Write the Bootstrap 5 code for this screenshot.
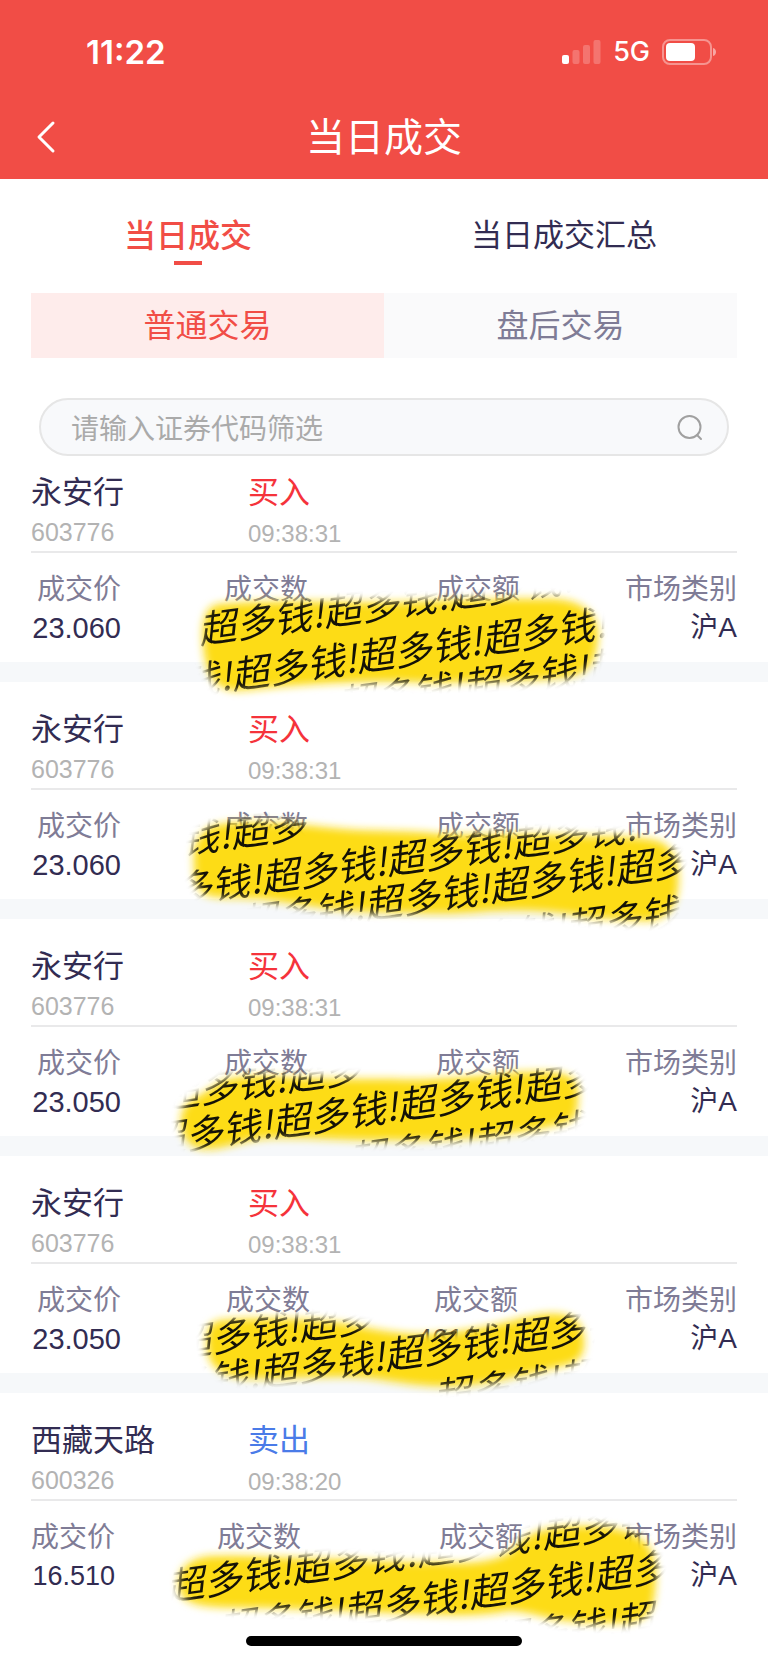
<!DOCTYPE html>
<html lang="zh-CN">
<head>
<meta charset="utf-8">
<meta name="viewport" content="width=device-width, initial-scale=1">
<title>当日成交</title>
<link href="https://cdn.jsdelivr.net/npm/bootstrap@5.3.0/dist/css/bootstrap.min.css" rel="stylesheet">
<style>
  :root { --gutter: 31px; --brand: #f14d46; --ink: #322c52; --muted-ink: #7f7c96; --pale: #b3b3b3; }
  body { font-family: "Liberation Sans", "Noto Sans CJK SC", sans-serif; color: var(--ink); background: #fff; }
  .app-header { background: var(--brand); color: #fff; padding-top: 32px; }
  .status-bar { height: 40px; padding: 0 51px 0 86px; font-family: Inter, sans-serif; }
  .clock { font-size: 33px; line-height: 40px; font-weight: 600; }
  .carrier { font-size: 27px; line-height: 40px; font-weight: 500; }
  .title-bar { height: 84px; margin-top: 23px; padding: 0 23px; }
  .title-bar .side { width: 48px; }
  .title-bar h1 { font-size: 39px; line-height: 48px; font-weight: 400; padding-top: 2px; }
  .main-tabs { padding: 35px 16px 28px 0; }
  .main-tabs button { font-size: 31px; line-height: 44px; color: var(--ink); }
  .main-tabs button::after { content: ""; display: block; width: 28px; height: 4px; margin: 3px auto 0; }
  .main-tabs .active { color: var(--brand); font-weight: 500; font-size: 32px; }
  .main-tabs .active::after { background: var(--brand); }
  .segments { margin: 0 var(--gutter); }
  .segments button { height: 65px; font-size: 32px; line-height: 40px; color: var(--muted-ink); background: #fafafb; }
  .segments .active { color: var(--brand); background: #feeceb; }
  .search-box { height: 58px; margin: 40px 39px 0; padding: 2px 24px 0 30px; background: #f8f9fb; border: 2px solid #e6e6e6; }
  .search-box input { font-size: 28px; line-height: 40px; color: var(--ink); outline: 0; min-width: 0; padding: 3px 0 0; }
  .search-box input::placeholder { color: #aaa; opacity: 1; }
  .trade + .trade .trade-head { padding-top: 28px; }
  .trade-head { display: grid; grid-template-columns: 217fr 489fr; padding: 17px 0 5px; margin: 0 var(--gutter); }
  .trade-name { font-size: 31px; line-height: 40px; font-weight: 400; }
  .sub-text { font-size: 25px; line-height: 28px; color: var(--pale); margin-top: 5px; }
  .sub-text.time { font-size: 24px; margin-top: 7px; margin-bottom: -2px; }
  .buy { color: #f5333b; }
  .sell { color: #4a7be8; }
  .trade-body { position: relative; padding-bottom: 15px; }
  .figures { display: grid; grid-template-columns: 90fr 187fr 212fr 217fr; margin: 0 var(--gutter); padding-top: 18px; border-top: 2px solid #e9e9ea; }
  .figures.cols-b { grid-template-columns: 90fr 189fr 208fr 219fr; }
  .figures.cols-c { grid-template-columns: 84fr 186fr 222fr 214fr; }
  .figures dt, .figures dd { font-size: 28px; line-height: 38px; margin: 0; font-weight: 400; white-space: nowrap; }
  .figures dt { color: var(--muted-ink); }
  .figures .price { font-size: 29px; }
  .figures.cols-c .price { font-size: 27px; }
  .band { height: 20px; background: #f6f8fa; }
  .scribble { position: absolute; left: 0; top: 0; width: 100%; overflow: visible; z-index: 2; pointer-events: none; }
  .scribble text { font: italic 400 38px "Noto Sans CJK SC", sans-serif; fill: #141207; }
  .scribble .paint { fill: #fddc19; filter: url(#soft); }
  .scribble .reveal { fill: #fff; stroke: #fff; stroke-width: 2; filter: url(#soft); }
  .home-bar { width: 36%; height: 10px; margin: 26px auto 16px; background: #000; }
</style>
</head>
<body>
<svg width="0" height="0" class="position-absolute" aria-hidden="true">
  <defs><filter id="soft" x="-10%" y="-20%" width="120%" height="140%"><feGaussianBlur stdDeviation="4"/></filter></defs>
</svg>

<header class="app-header">
  <div class="status-bar d-flex align-items-center justify-content-between">
    <span class="clock">11:22</span>
    <div class="d-flex align-items-center">
      <svg width="39" height="26" viewBox="0 0 39 26" fill="#fff" aria-hidden="true">
        <rect x="0" y="16" width="7" height="9" rx="2"/>
        <g opacity=".22"><rect x="10.500" y="11" width="7" height="14" rx="2"/><rect x="21" y="6" width="7" height="19" rx="2"/><rect x="31.500" y="1" width="7" height="24" rx="2"/></g>
      </svg>
      <span class="carrier ms-2 ps-1 me-2 pe-1">5G</span>
      <svg width="55" height="26" viewBox="0 0 55 26" aria-hidden="true">
        <rect x="1" y="1" width="48" height="24" rx="7" fill="none" stroke="#fff" stroke-opacity=".4" stroke-width="2"/>
        <rect x="4" y="4" width="29" height="18" rx="4" fill="#fff"/>
        <path d="M51 9c4 1 4 7 0 8z" fill="#fff" fill-opacity=".5"/>
      </svg>
    </div>
  </div>
  <div class="title-bar d-flex align-items-center">
    <button type="button" class="side btn p-0 border-0 text-start" aria-label="返回">
      <svg width="44" height="36" viewBox="0 0 44 36" fill="none" stroke="#fff" stroke-width="3" stroke-linejoin="round" stroke-linecap="round"><path d="M30 4 16 18l14 14"/></svg>
    </button>
    <h1 class="flex-grow-1 text-center m-0">当日成交</h1>
    <span class="side"></span>
  </div>
</header>

<main>
  <div class="main-tabs d-flex" role="tablist">
    <button type="button" role="tab" aria-selected="true" class="active col-6 border-0 bg-transparent p-0">当日成交</button>
    <button type="button" role="tab" aria-selected="false" class="col-6 border-0 bg-transparent p-0">当日成交汇总</button>
  </div>
  <div class="segments d-flex">
    <button type="button" class="active col-6 border-0 p-0">普通交易</button>
    <button type="button" class="col-6 border-0 p-0">盘后交易</button>
  </div>
  <form class="search-box d-flex align-items-center rounded-pill">
    <input type="text" class="flex-grow-1 border-0 bg-transparent" placeholder="请输入证券代码筛选" aria-label="证券代码">
    <button type="button" class="border-0 bg-transparent p-0 d-flex" aria-label="搜索">
      <svg width="26" height="28" viewBox="0 0 26 28" fill="none" stroke="#a0a0a0" stroke-width="2" stroke-linecap="round"><circle cx="12.500" cy="13" r="11"/><path d="m20 21 4 4"/></svg>
    </button>
  </form>

  <article class="trade">
    <div class="trade-head">
      <div><h2 class="trade-name m-0">永安行</h2><div class="sub-text">603776</div></div>
      <div><div class="trade-name buy">买入</div><div class="sub-text time">09:38:31</div></div>
    </div>
    <div class="trade-body">
      <dl class="figures mb-0 text-end">
        <div><dt>成交价</dt><dd class="price">23.060</dd></div>
        <div><dt>成交数</dt></div>
        <div><dt>成交额</dt></div>
        <div><dt>市场类别</dt><dd>沪A</dd></div>
      </dl>
      <svg class="scribble" viewBox="0 0 768 150">
        <path class="paint" d="M203 90C202 65 208 53 222 53C280 48 340 52 400 51C450 50 500 47 539 48C570 46 594 54 598 80C598 105 592 118 576 124C540 132 500 128 440 132C370 128 310 132 245 139C220 142 205 130 203 90Z"/>
        <mask id="m1" maskUnits="userSpaceOnUse" x="150" y="0" width="500" height="190"><path class="reveal" d="M203 90C202 65 208 53 222 53C280 48 340 52 400 51C450 50 500 47 539 48C570 46 594 54 598 80C598 105 592 118 576 124C540 132 500 128 440 132C370 128 310 132 245 139C220 142 205 130 203 90Z"/></mask>
        <g mask="url(#m1)">
          <text x="200" y="93" transform="rotate(-8 200 93)">超多钱!超多钱!超多钱!</text>
          <text x="108" y="156" transform="rotate(-8 108 156)">超多钱!超多钱!超多钱!超多钱!超</text>
          <text x="339" y="167" transform="rotate(-8 339 167)">超多钱!超多钱!超</text>
        </g>
      </svg>
    </div>
    <div class="band"></div>
  </article>

  <article class="trade">
    <div class="trade-head">
      <div><h2 class="trade-name m-0">永安行</h2><div class="sub-text">603776</div></div>
      <div><div class="trade-name buy">买入</div><div class="sub-text time">09:38:31</div></div>
    </div>
    <div class="trade-body">
      <dl class="figures mb-0 text-end">
        <div><dt>成交价</dt><dd class="price">23.060</dd></div>
        <div><dt>成交数</dt></div>
        <div><dt>成交额</dt></div>
        <div><dt>市场类别</dt><dd>沪A</dd></div>
      </dl>
      <svg class="scribble" viewBox="0 0 768 150">
        <path class="paint" d="M194 75C192 50 205 36 230 35C270 32 310 38 343 41C380 44 410 42 441 46C490 48 540 44 588 48C625 48 650 50 661 54C676 62 680 80 678 100C676 120 665 132 647 133C620 132 600 130 588 129C550 122 520 122 490 123C440 128 400 124 367 124C330 122 300 116 274 113C250 108 225 112 206 107C196 100 194 90 194 75Z"/>
        <mask id="m2" maskUnits="userSpaceOnUse" x="150" y="0" width="580" height="190"><path class="reveal" d="M194 75C192 50 205 36 230 35C270 32 310 38 343 41C380 44 410 42 441 46C490 48 540 44 588 48C625 48 650 50 661 54C676 62 680 80 678 100C676 120 665 132 647 133C620 132 600 130 588 129C550 122 520 122 490 123C440 128 400 124 367 124C330 122 300 116 274 113C250 108 225 112 206 107C196 100 194 90 194 75Z"/></mask>
        <g mask="url(#m2)">
          <text x="107" y="77" transform="rotate(-8 107 77)">超多钱!超多</text>
          <text x="138" y="122" transform="rotate(-8 138 122)">超多钱!超多钱!超多钱!超多钱!</text>
          <text x="241" y="149" transform="rotate(-8 241 149)">超多钱!超多钱!超多钱!超多</text>
          <text x="442" y="171" transform="rotate(-8 442 171)">超多钱!超多钱</text>
        </g>
      </svg>
    </div>
    <div class="band"></div>
  </article>

  <article class="trade">
    <div class="trade-head">
      <div><h2 class="trade-name m-0">永安行</h2><div class="sub-text">603776</div></div>
      <div><div class="trade-name buy">买入</div><div class="sub-text time">09:38:31</div></div>
    </div>
    <div class="trade-body">
      <dl class="figures mb-0 text-end">
        <div><dt>成交价</dt><dd class="price">23.050</dd></div>
        <div><dt>成交数</dt></div>
        <div><dt>成交额</dt></div>
        <div><dt>市场类别</dt><dd>沪A</dd></div>
      </dl>
      <svg class="scribble" viewBox="0 0 768 150">
        <path class="paint" d="M181 96C180 76 200 72 216 60C230 50 250 51 269 51C310 54 350 54 392 54C430 56 460 52 490 50C520 46 545 46 558 48C574 50 578 58 578 70C578 86 576 94 568 97C550 102 530 106 514 108C470 114 430 116 392 115C350 116 310 112 269 113C245 114 225 124 208 124C188 124 182 112 181 96Z"/>
        <mask id="m3" maskUnits="userSpaceOnUse" x="150" y="0" width="500" height="190"><path class="reveal" d="M181 96C180 76 200 72 216 60C230 50 250 51 269 51C310 54 350 54 392 54C430 56 460 52 490 50C520 46 545 46 558 48C574 50 578 58 578 70C578 86 576 94 568 97C550 102 530 106 514 108C470 114 430 116 392 115C350 116 310 112 269 113C245 114 225 124 208 124C188 124 182 112 181 96Z"/></mask>
        <g mask="url(#m3)">
          <text x="163" y="84" transform="rotate(-8 163 84)">超多钱!超多</text>
          <text x="149" y="130" transform="rotate(-8 149 130)">超多钱!超多钱!超多钱!超多</text>
          <text x="350" y="149" transform="rotate(-8 350 149)">超多钱!超多钱</text>
        </g>
      </svg>
    </div>
    <div class="band"></div>
  </article>

  <article class="trade">
    <div class="trade-head">
      <div><h2 class="trade-name m-0">永安行</h2><div class="sub-text">603776</div></div>
      <div><div class="trade-name buy">买入</div><div class="sub-text time">09:38:31</div></div>
    </div>
    <div class="trade-body">
      <dl class="figures cols-b mb-0 text-end">
        <div><dt>成交价</dt><dd class="price">23.050</dd></div>
        <div><dt>成交数</dt></div>
        <div><dt>成交额</dt><dd>4610.00</dd></div>
        <div><dt>市场类别</dt><dd>沪A</dd></div>
      </dl>
      <svg class="scribble" viewBox="0 0 768 150">
        <path class="paint" d="M207 84C206 68 208 60 222 58C245 56 270 56 294 57C320 58 345 60 367 66C390 70 405 72 421 72C445 72 470 68 490 64C510 60 525 54 545 52C568 50 582 56 584 77C585 92 580 100 566 103C548 108 530 112 514 115C480 124 455 125 431 124C400 122 380 116 353 115C315 114 280 118 245 116C220 114 208 104 207 84Z"/>
        <mask id="m4" maskUnits="userSpaceOnUse" x="150" y="0" width="500" height="190"><path class="reveal" d="M207 84C206 68 208 60 222 58C245 56 270 56 294 57C320 58 345 60 367 66C390 70 405 72 421 72C445 72 470 68 490 64C510 60 525 54 545 52C568 50 582 56 584 77C585 92 580 100 566 103C548 108 530 112 514 115C480 124 455 125 431 124C400 122 380 116 353 115C315 114 280 118 245 116C220 114 208 104 207 84Z"/></mask>
        <g mask="url(#m4)">
          <text x="175" y="96" transform="rotate(-8 175 96)">超多钱!超多</text>
          <text x="136" y="143" transform="rotate(-8 136 143)">超多钱!超多钱!超多钱!超多钱</text>
          <text x="435" y="149" transform="rotate(-8 435 149)">超多钱!超</text>
        </g>
      </svg>
    </div>
    <div class="band"></div>
  </article>

  <article class="trade">
    <div class="trade-head">
      <div><h2 class="trade-name m-0">西藏天路</h2><div class="sub-text">600326</div></div>
      <div><div class="trade-name sell">卖出</div><div class="sub-text time">09:38:20</div></div>
    </div>
    <div class="trade-body">
      <dl class="figures cols-c mb-0 text-end">
        <div><dt>成交价</dt><dd class="price">16.510</dd></div>
        <div><dt>成交数</dt></div>
        <div><dt>成交额</dt></div>
        <div><dt>市场类别</dt><dd>沪A</dd></div>
      </dl>
      <svg class="scribble" viewBox="0 0 768 150">
        <path class="paint" d="M179 84C179 66 195 56 220 57C260 56 300 60 343 60C380 62 410 64 441 63C470 66 495 62 509 54C524 40 530 28 578 27C615 26 642 34 650 50C658 66 656 85 654 100C650 118 640 123 620 124C600 124 575 124 553 120C535 116 525 112 509 112C475 118 445 116 416 115C375 114 335 110 294 110C260 108 230 110 206 107C186 104 179 98 179 84Z"/>
        <mask id="m5" maskUnits="userSpaceOnUse" x="150" y="0" width="550" height="190"><path class="reveal" d="M179 84C179 66 195 56 220 57C260 56 300 60 343 60C380 62 410 64 441 63C470 66 495 62 509 54C524 40 530 28 578 27C615 26 642 34 650 50C658 66 656 85 654 100C650 118 640 123 620 124C600 124 575 124 553 120C535 116 525 112 509 112C475 118 445 116 416 115C375 114 335 110 294 110C260 108 230 110 206 107C186 104 179 98 179 84Z"/></mask>
        <g mask="url(#m5)">
          <text x="168" y="102" transform="rotate(-8 168 102)">超多钱!超多钱!超多钱!超多钱</text>
          <text x="220" y="144" transform="rotate(-8 220 144)">超多钱!超多钱!超多钱!超多钱</text>
          <text x="493" y="155" transform="rotate(-8 493 155)">超多钱!超</text>
        </g>
      </svg>
    </div>
  </article>
  <div class="home-bar rounded-pill"></div>
</main>
<script src="https://cdn.jsdelivr.net/npm/bootstrap@5.3.0/dist/js/bootstrap.bundle.min.js"></script>
</body>
</html>
